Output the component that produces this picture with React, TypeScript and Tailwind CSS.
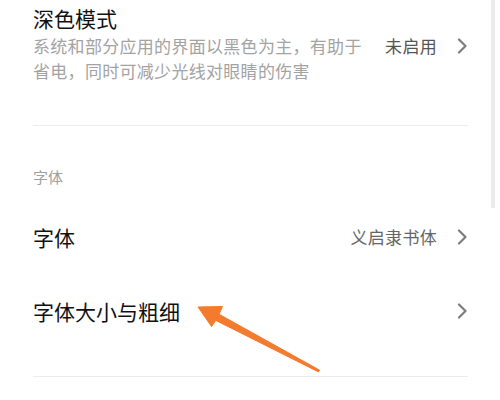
import React from 'react';

const font = { fontFamily: '"Noto Sans CJK SC", "Noto Sans", sans-serif' };

function Chevron() {
  return (
    <svg width="11" height="16" viewBox="0 0 11 16" className="shrink-0">
      <path d="M2 1.5 L8.5 8 L2 14.5" fill="none" stroke="#7d7d7d" strokeWidth="2.2" strokeLinecap="round" strokeLinejoin="round" />
    </svg>
  );
}

function Row({ title, value }: { title: string; value?: string }) {
  return (
    <div className="flex items-center h-[74px]">
      <span className="text-[21px] leading-[28px] text-[#111]">{title}</span>
      <div className="ml-auto flex items-center gap-[20px]">
        {value && <span className="text-[17px] tracking-[0.3px] text-[#666]">{value}</span>}
        <Chevron />
      </div>
    </div>
  );
}

export default function App() {
  return (
    <div className="relative w-[500px] h-[400px] bg-white overflow-hidden" style={font}>
      <div className="pl-[33px] pr-[32px]">
        <div className="h-[125px] pt-[5px]">
          <div className="text-[21px] leading-[27px] text-[#111]">深色模式</div>
          <div className="flex items-start pt-[1px]">
            <p className="w-[336px] text-[17px] leading-[25px] tracking-[0.3px] text-[#a3a3a3]">
              系统和部分应用的界面以黑色为主，有助于省电，同时可减少光线对眼睛的伤害
            </p>
            <div className="ml-auto flex items-center gap-[20px] h-[25px]">
              <span className="text-[17px] tracking-[0.3px] text-[#555]">未启用</span>
              <Chevron />
            </div>
          </div>
        </div>
        <div className="h-px bg-[#ececec]" />
        <div className="mt-[41px] mb-[13px] text-[15px] leading-[20px] text-[#a0a0a0]">字体</div>
        <Row title="字体" value="义启隶书体" />
        <Row title="字体大小与粗细" />
        <div className="mt-[28px] h-px bg-[#ececec]" />
      </div>
      <div className="absolute right-[5px] top-0 w-[4px] h-[208px] bg-[#ebebeb]" />
      <svg className="absolute left-0 top-0 pointer-events-none" width="500" height="400">
        <polygon
          points="198,307 222.5,306.5 219,314.2 319.5,370.1 318.5,371.9 215.8,320.4 211.5,326.5"
          fill="#f47a2e"
          stroke="#f47a2e"
          strokeWidth="1"
          strokeLinejoin="round"
        />
      </svg>
    </div>
  );
}
